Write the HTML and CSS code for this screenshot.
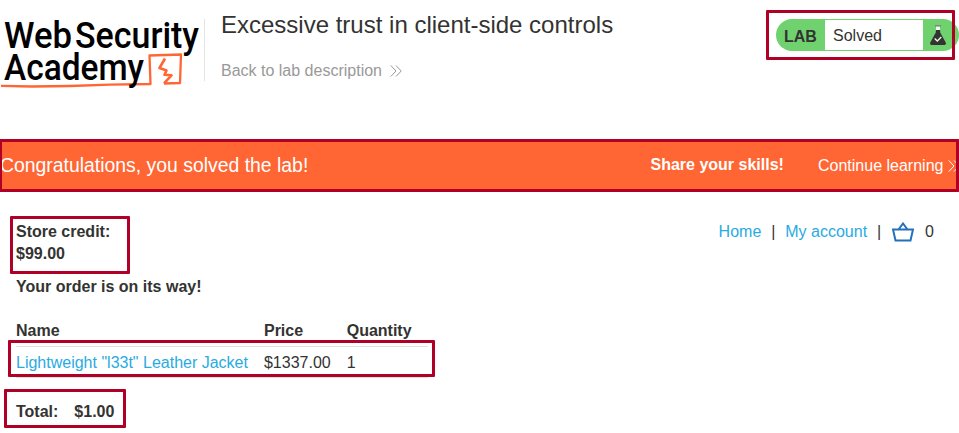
FILE: index.html
```
<!DOCTYPE html>
<html lang="en">
<head>
<meta charset="utf-8">
<title>Excessive trust in client-side controls</title>
<link rel="stylesheet" href="styles.css">
</head>
<body>
<header class="lab-header">
  <svg class="logo" viewBox="0 0 204 100" role="img" aria-label="Web Security Academy">
    <path class="logo-line" d="M1 85.8L32 86.5L70 86L110 84.7L150.5 84L149.5 55.5L181 54.5L180 83L164 83.5"/>
    <path class="logo-line logo-bolt" d="M165 58.5L159.5 68L166.5 70.5L164.5 74.8L171.5 75.3L164 83.3"/>
    <g class="logo-text">
      <text x="4" y="47.5" textLength="68" lengthAdjust="spacingAndGlyphs">Web</text>
      <text x="75" y="47.5" textLength="124" lengthAdjust="spacingAndGlyphs">Security</text>
      <text x="4" y="80" textLength="140" lengthAdjust="spacingAndGlyphs">Academy</text>
    </g>
  </svg>
  <div class="title">
    <h1>Excessive trust in client-side controls</h1>
    <a class="back">Back to lab description
      <svg class="chevrons" viewBox="0 0 12 12"><path d="M.8.5L6 6L.8 11.5M6 .5L11.2 6L6 11.5"/></svg>
    </a>
  </div>
  <div class="status">
    <b>LAB</b>
    <span>Solved</span>
    <svg class="flask" viewBox="0 0 16 20">
      <path d="M6 1V6L5.5 8H10.5L10 6V1Z" fill="#eef7ee"/>
      <path d="M5 .8H11" stroke="#777" stroke-width="1.2"/>
      <path d="M6 5H10L10.5 8L16 18Q16 20 14.5 20H1.5Q0 20 0 18L5.5 8Z" fill="#333332"/>
      <path d="M4.7 13.5L7.3 16L11.3 12" fill="none" stroke="#e9f7e8" stroke-width="1.3"/>
    </svg>
  </div>
</header>
<section class="banner">
  <span class="congrats">Congratulations, you solved the lab!</span>
  <b>Share your skills!</b>
  <a class="continue">Continue learning<svg class="chevrons" viewBox="0 0 12 12"><path d="M.8.5L6 6L.8 11.5M6 .5L11.2 6L6 11.5"/></svg></a>
</section>
<main>
  <div class="top">
    <p class="credit">Store credit:<br>$99.00</p>
    <nav>
      <a>Home</a><i>|</i><a>My account</a><i>|</i>
      <svg class="basket" viewBox="0 0 22 20"><path d="M1 7.5H21L18.5 18.5H3.5ZM6.5 7.5L11 1.5L15.5 7.5"/></svg>
      <span>0</span>
    </nav>
  </div>
  <p class="order">Your order is on its way!</p>
  <table class="items">
    <tr><th>Name</th><th>Price</th><th>Quantity</th></tr>
    <tr><td><a>Lightweight "l33t" Leather Jacket</a></td><td>$1337.00</td><td>1</td></tr>
  </table>
  <p class="total"><span>Total:</span><span>$1.00</span></p>
</main>
<div class="mark mark-status"></div>
<div class="mark mark-banner"></div>
<div class="mark mark-credit"></div>
<div class="mark mark-item"></div>
<div class="mark mark-total"></div>
</body>
</html>
```
FILE: styles.css
```
* { box-sizing: border-box; }
body {
  margin: 0;
  width: 959px;
  height: 433px;
  overflow: hidden;
  position: relative;
  background: #fff;
  color: #333332;
  font: 16px/22px "Liberation Sans", Arial, sans-serif;
}
h1, p { margin: 0; }
.lab-header { display: flex; height: 139px; }
.logo { width: 204px; height: 100px; flex: none; overflow: visible; }
.logo-text {
  font: 500 37px Roboto, sans-serif;
  fill: #000;
}
.logo-line { fill: none; stroke: #ff6633; stroke-width: 2.3; stroke-linejoin: round; }
.logo-bolt { stroke-width: 2.6; }
.title {
  flex: 1;
  height: 62px;
  margin-top: 19px;
  padding-left: 16px;
  border-left: 1px solid #e3e3e3;
}
h1 { font-size: 24px; font-weight: 400; line-height: 28px; margin-top: -8px; }
.back { display: flex; align-items: center; gap: 8px; margin-top: 21px; color: #999; }
.chevrons { width: 12px; height: 12px; flex: none; fill: none; stroke: currentColor; stroke-width: 1; }
.status {
  display: flex;
  align-items: center;
  width: 183px;
  height: 32px;
  margin-top: 19px;
  border-radius: 16px;
  background: #70d26f;
  overflow: hidden;
}
.status b { width: 49px; padding: 3px 0 0 8px; }
.status span { width: 98px; height: 30px; padding-left: 8px; line-height: 32px; background: #fff; }
.flask { width: 16px; height: 20px; margin-left: 7px; }
.banner {
  display: flex;
  align-items: center;
  height: 53px;
  background: #ff6633;
  color: #fff;
  white-space: nowrap;
  overflow: hidden;
}
.congrats { width: 650.5px; font-size: 19.4px; flex: none; padding-bottom: 2px; }
.banner b { width: 167.5px; flex: none; padding-bottom: 2px; }
.continue { display: flex; align-items: center; gap: 5px; }
main { padding: 29px 25px 0 16px; }
.top { display: flex; justify-content: space-between; }
.credit, .order, .total { font-weight: 700; }
nav { display: flex; align-items: center; height: 22px; }
nav a, td a { color: #29abe2; }
nav i { width: 24px; text-align: center; font-style: normal; }
.basket { width: 22px; height: 20px; margin: 0 11px 0 1px; fill: none; stroke: #2371bd; stroke-width: 2; }
.order { margin-top: 11px; }
.items { margin-top: 17px; border-collapse: collapse; }
.items th, .items td { padding: 5px 16px 4px 0; text-align: left; font-weight: 400; white-space: nowrap; }
.items th { font-weight: 700; }
.items td { border-top: 1px solid #e0e0e0; border-bottom: 1px solid #e0e0e0; }
.items td { padding-bottom: 3px; }
.total { display: flex; gap: 16px; margin-top: 23px; }
.mark { position: absolute; border: 3px solid #b00026; border-radius: 1px; }
.mark-status { left: 766px; top: 10px; width: 189px; height: 50px; }
.mark-banner { left: -1px; top: 139px; width: 960px; height: 53px; }
.mark-credit { left: 10px; top: 216px; width: 120px; height: 58px; }
.mark-item { left: 8px; top: 340px; width: 427px; height: 37px; }
.mark-total { left: 4px; top: 389px; width: 122px; height: 39px; }
```
